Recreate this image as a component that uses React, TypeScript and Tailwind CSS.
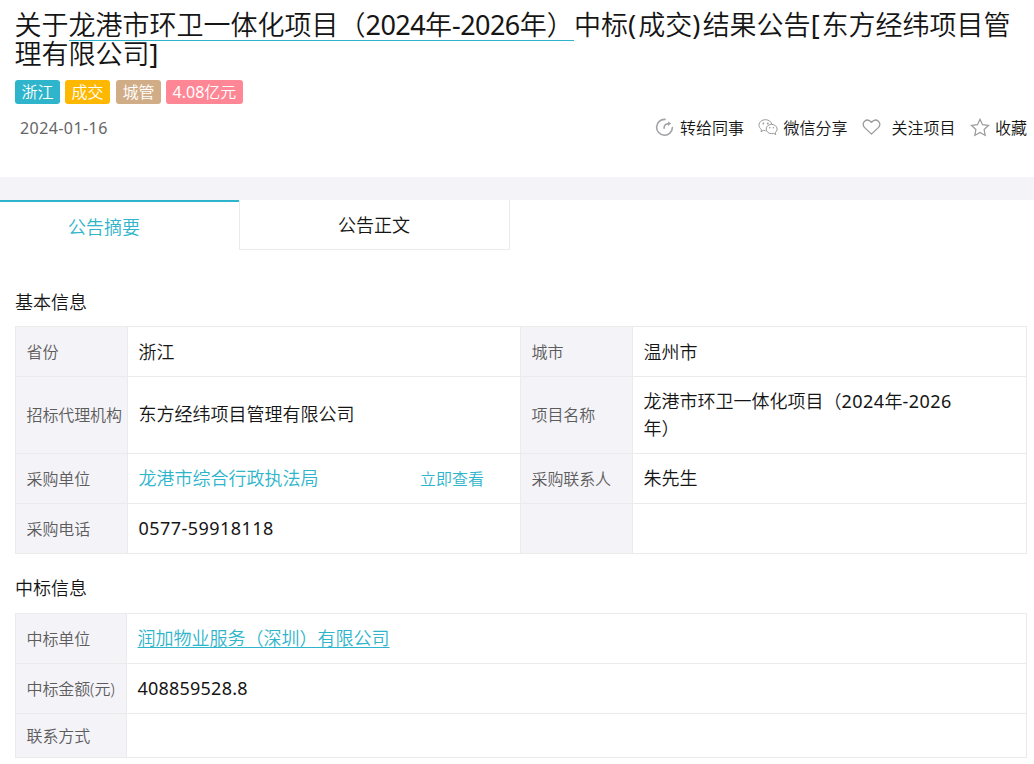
import type { ReactNode } from "react";

function Label({ children }: { children?: ReactNode }) {
  return (
    <td className="border border-[#ebebeb] bg-[#f4f3f8] pl-[10.5px] text-[16px] leading-6 tracking-[-0.1px] text-[#5c5c5c] whitespace-nowrap">
      {children}
    </td>
  );
}

function Value({ children }: { children?: ReactNode }) {
  return (
    <td className="border border-[#ebebeb] pl-[10.5px] text-[18px] leading-[27px] whitespace-nowrap">{children}</td>
  );
}

function ShareIcon() {
  return (
    <svg width="20" height="20" viewBox="0 0 20 20" fill="none" stroke="#a3a3a8" strokeWidth="1.6" strokeLinecap="round">
      <path d="M11 1.4A7.9 7.9 0 1 0 18.4 9.6" />
      <path d="M10.1 10.2C10 7.2 11.4 5.7 15 5.6" />
      <path d="M14 3.4L17.2 5.6L14 8Z" fill="#a3a3a8" stroke="none" />
    </svg>
  );
}

function WechatIcon() {
  return (
    <svg width="20" height="20" viewBox="0 0 20 20" fill="none" stroke="#999" strokeWidth="1" strokeLinejoin="round">
      <path d="M13.7 6.1C13.1 3.5 10.6 1.7 7.5 1.7C3.9 1.7 1 4.1 1 7.2C1 9 2 10.5 3.5 11.5L3 13.7L5.4 12.4C6.1 12.6 6.8 12.7 7.5 12.7" />
      <path d="M13.6 6.4C10.6 6.4 8.2 8.4 8.2 11S10.6 15.7 13.6 15.7C14.3 15.7 15 15.6 15.6 15.4L17.7 16.6L17.2 14.6C18.4 13.7 19.1 12.4 19.1 11C19.1 8.4 16.6 6.4 13.6 6.4Z" />
      <g fill="#999" stroke="none">
        <circle cx="5.4" cy="5.5" r="0.9" />
        <circle cx="9.8" cy="5.5" r="0.9" />
        <circle cx="11.8" cy="9.7" r="0.8" />
        <circle cx="15.4" cy="9.7" r="0.8" />
      </g>
    </svg>
  );
}

function HeartIcon() {
  return (
    <svg width="20" height="20" viewBox="0 0 20 20" fill="none" stroke="#999" strokeWidth="1.3" strokeLinejoin="round">
      <path d="M9.5 16.1L2.4 9.4C-1.5 4.9 4.6 -1.1 9.5 4.3C14.4 -1.1 20.5 4.9 16.6 9.4Z" />
    </svg>
  );
}

function StarIcon() {
  return (
    <svg width="20" height="20" viewBox="0 0 20 20" fill="none" stroke="#999" strokeWidth="1.2" strokeLinejoin="miter">
      <path d="M10 1.3L12.5 6.7L18.5 7.4L14.1 11.5L15.2 17.4L10 14.5L4.8 17.4L5.9 11.5L1.5 7.4L7.5 6.7Z" />
    </svg>
  );
}

export default function App() {
  return (
    <div className="h-[764px] w-[1034px] overflow-hidden bg-white font-['Noto_Sans','Noto_Sans_CJK_SC',sans-serif] font-[350] text-[#151515]">
      <header className="h-[177px] pt-[10px]">
        <h1 className="pl-[14.5px] text-[27px] font-[350] whitespace-nowrap">
          <span className="block h-[29px] leading-[29px]">
            关于
            <span className="inline-block h-[31px] w-[505.5px] border-b border-[#2fb5cb] align-top">
              龙港市环卫一体化项目（<span className="font-normal tracking-[-0.56px]">2024</span>年
              <span className="font-normal tracking-[-0.56px]">-2026</span>年）
            </span>
            中标<span className="font-normal tracking-[2.2px]">(</span>成交
            <span className="font-normal tracking-[2.2px]">)</span>结果公告
            <span className="font-normal tracking-[2px]">[</span>东方经纬项目管
          </span>
          <span className="block h-[31px] leading-[29px]">
            理有限公司<span className="font-normal">]</span>
          </span>
        </h1>
        <div className="mt-[10px] flex gap-[5px] pl-[15px] text-[16px] leading-6 text-white">
          <span className="h-6 w-[45px] rounded-[3px] bg-[#2fb5cb] text-center">浙江</span>
          <span className="h-6 w-[45px] rounded-[3px] bg-[#ffb800] text-center">成交</span>
          <span className="ml-px h-6 w-[45px] rounded-[3px] bg-[#d0ad87] text-center">城管</span>
          <span className="h-6 w-[77px] rounded-[3px] bg-[#ff8694] text-center">
            <span className="font-normal">4.08</span>亿元
          </span>
        </div>
        <div className="mt-3 flex h-6 items-center pl-5 text-[16px] leading-6">
          <span className="w-[634px] font-normal tracking-[0.42px] text-[#666]">2024-01-16</span>
          <ShareIcon />
          <span className="ml-[6px] w-16">转给同事</span>
          <span className="ml-[14px]"><WechatIcon /></span>
          <span className="ml-[5.5px] w-16">微信分享</span>
          <span className="ml-[14.5px]"><HeartIcon /></span>
          <span className="ml-[9.5px] w-16">关注项目</span>
          <span className="ml-[14.5px]"><StarIcon /></span>
          <span className="ml-[5px] w-8 whitespace-nowrap">收藏</span>
        </div>
      </header>
      <div className="h-[23px] bg-[#f4f3f8]" />
      <nav className="flex h-[50px] text-[18px]">
        <div className="h-[50px] w-[240px] shrink-0 border-t-2 border-[#2fb5cb] pr-8 text-center leading-[50px] text-[#2fb5cb]">
          公告摘要
        </div>
        <div className="-ml-px h-[50px] w-[271px] border border-t-0 border-[#ebebeb] pr-px text-center leading-[51px]">
          公告正文
        </div>
      </nav>
      <main className="pl-[15px]">
        <h2 className="mt-[39px] h-[37px] text-[18px] leading-[27px] font-[350]">基本信息</h2>
        <table className="w-[1012px] table-fixed border-collapse">
          <colgroup>
            <col className="w-[112px]" />
            <col className="w-[393px]" />
            <col className="w-[112px]" />
            <col className="w-[394px]" />
          </colgroup>
          <tbody>
            <tr className="h-[50px]">
              <Label>省份</Label>
              <Value><div className="pt-px">浙江</div></Value>
              <Label>城市</Label>
              <Value><div className="pt-px">温州市</div></Value>
            </tr>
            <tr className="h-[77px]">
              <Label>招标代理机构</Label>
              <Value><div className="pb-px">东方经纬项目管理有限公司</div></Value>
              <Label>项目名称</Label>
              <Value>
                龙港市环卫一体化项目（<span className="font-normal tracking-[0.45px]">2024</span>年
                <span className="font-normal tracking-[0.45px]">-2026</span>
                <br />
                年）
              </Value>
            </tr>
            <tr className="h-[50px]">
              <Label>采购单位</Label>
              <Value>
                <div className="flex items-center justify-between pr-9 text-[#2fb5cb]">
                  <span>龙港市综合行政执法局</span>
                  <span className="pt-px text-[16px]">立即查看</span>
                </div>
              </Value>
              <Label>采购联系人</Label>
              <Value>朱先生</Value>
            </tr>
            <tr className="h-[50px]">
              <Label>采购电话</Label>
              <Value><span className="font-normal tracking-[0.45px]">0577-59918118</span></Value>
              <Label />
              <Value />
            </tr>
          </tbody>
        </table>
        <h2 className="mt-[21px] h-[38px] text-[18px] leading-[27px] font-[350]">中标信息</h2>
        <table className="w-[1012px] table-fixed border-collapse">
          <colgroup>
            <col className="w-[111px]" />
            <col className="w-[900px]" />
          </colgroup>
          <tbody>
            <tr className="h-[50px]">
              <Label>中标单位</Label>
              <Value>
                <span className="text-[#2fb5cb] underline decoration-1 underline-offset-2">润加物业服务（深圳）有限公司</span>
              </Value>
            </tr>
            <tr className="h-[50px]">
              <Label>中标金额(元)</Label>
              <Value><span className="font-normal tracking-[0.22px]">408859528.8</span></Value>
            </tr>
            <tr className="h-[44px]">
              <Label>联系方式</Label>
              <Value />
            </tr>
          </tbody>
        </table>
      </main>
    </div>
  );
}
